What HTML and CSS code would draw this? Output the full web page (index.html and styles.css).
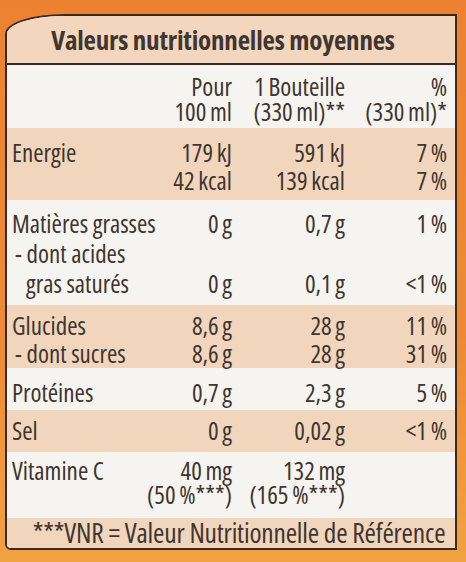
FILE: index.html
```html
<!DOCTYPE html>
<html lang="fr">

<head>
  <meta charset="UTF-8">
  <meta name="viewport" content="width=device-width, initial-scale=1.0">
  <title>Valeurs nutritionnelles</title>
  <link rel="stylesheet" href="styles.css">
</head>

<body>
  <div class="label">
    <h1 class="title">Valeurs nutritionnelles moyennes</h1>

    <div class="band white heads">
      <div class="row">
        <span></span>
        <span class="num">Pour</span>
        <span class="num">1 Bouteille</span>
        <span class="num">%</span>
      </div>
      <div class="row">
        <span></span>
        <span class="num">100 ml</span>
        <span class="num">(330 ml)**</span>
        <span class="num">(330 ml)*</span>
      </div>
    </div>

    <div class="band peach energy">
      <div class="row">
        <span>Energie</span>
        <span class="num">179 kJ</span>
        <span class="num">591 kJ</span>
        <span class="num">7 %</span>
      </div>
      <div class="row">
        <span></span>
        <span class="num">42 kcal</span>
        <span class="num">139 kcal</span>
        <span class="num">7 %</span>
      </div>
    </div>

    <div class="band white fats">
      <div class="row">
        <span>Matières grasses</span>
        <span class="num">0 g</span>
        <span class="num">0,7 g</span>
        <span class="num">1 %</span>
      </div>
      <div class="row">
        <span class="sub">- dont acides</span>
        <span></span>
        <span></span>
        <span></span>
      </div>
      <div class="row">
        <span class="sub2">gras saturés</span>
        <span class="num">0 g</span>
        <span class="num">0,1 g</span>
        <span class="num">&lt;1 %</span>
      </div>
    </div>

    <div class="band peach carbs">
      <div class="row">
        <span>Glucides</span>
        <span class="num">8,6 g</span>
        <span class="num">28 g</span>
        <span class="num">11 %</span>
      </div>
      <div class="row">
        <span class="sub">- dont sucres</span>
        <span class="num">8,6 g</span>
        <span class="num">28 g</span>
        <span class="num">31 %</span>
      </div>
    </div>

    <div class="band white single">
      <div class="row">
        <span>Protéines</span>
        <span class="num">0,7 g</span>
        <span class="num">2,3 g</span>
        <span class="num">5 %</span>
      </div>
    </div>

    <div class="band peach single salt">
      <div class="row">
        <span>Sel</span>
        <span class="num">0 g</span>
        <span class="num">0,02 g</span>
        <span class="num">&lt;1 %</span>
      </div>
    </div>

    <div class="band white vitamin">
      <div class="row">
        <span>Vitamine C</span>
        <span class="num">40 mg</span>
        <span class="num">132 mg</span>
        <span></span>
      </div>
      <div class="row">
        <span></span>
        <span class="num">(50 %***)</span>
        <span class="num">(165 %***)</span>
        <span></span>
      </div>
    </div>

    <div class="band peach footnote">***VNR = Valeur Nutritionnelle de Référence</div>
  </div>
</body>

</html>
```
FILE: styles.css
```css
* {
  box-sizing: border-box;
  margin: 0;
  padding: 0;
}

body {
  font-family: "Open Sans", "Liberation Sans", sans-serif;
  font-stretch: 75%;
  font-weight: 500;
  font-size: 25px;
  color: #40352f;
  background: linear-gradient(#ec8231, #ee8a35 60%, #f1a241);
  height: 562px;
  overflow: hidden;
  padding-top: 14px;
}

.label {
  margin-left: 5px;
  width: 452px;
  border: 2px solid #3a2a20;
  border-top-left-radius: 60px 20px;
  border-bottom-left-radius: 6px;
  overflow: hidden;
  background: #f6f4f1;
}

.title {
  height: 49px;
  line-height: 47px;
  padding-right: 16px;
  border-bottom: 2px solid #3a2a20;
  background: #f2d6be;
  font-size: 27px;
  font-weight: 700;
  letter-spacing: -0.2px;
  text-align: center;
  white-space: nowrap;
}

.band {
  padding: 0 8px 0 5px;
}

.white {
  background: #f6f4f1;
}

.peach {
  background: #f1d5bd;
}

.row {
  display: grid;
  grid-template-columns: minmax(0, 1fr) 100px 113px 102px;
  line-height: 28px;
  white-space: nowrap;
}

.num {
  text-align: right;
  word-spacing: -1px;
}

.sub {
  padding-left: 3px;
}

.sub2 {
  padding-left: 14px;
}

.heads {
  height: 63px;
  padding-top: 9px;
}

.heads .row {
  line-height: 25px;
}

.energy {
  height: 72px;
  padding-top: 10px;
}

.fats {
  height: 105px;
  padding-top: 8px;
}

.fats .row {
  line-height: 30px;
}

.carbs {
  height: 63px;
  padding-top: 6px;
}

.single {
  height: 42px;
  padding-top: 10px;
}

.salt {
  height: 42px;
  padding-top: 6px;
}

.vitamin {
  height: 66px;
  padding-top: 6px;
}

.vitamin .row {
  line-height: 24px;
}

.footnote {
  height: 30px;
  line-height: 30px;
  font-size: 27.5px;
  letter-spacing: -0.2px;
  padding: 0 0 0 16px;
  text-align: center;
  white-space: nowrap;
}
```
